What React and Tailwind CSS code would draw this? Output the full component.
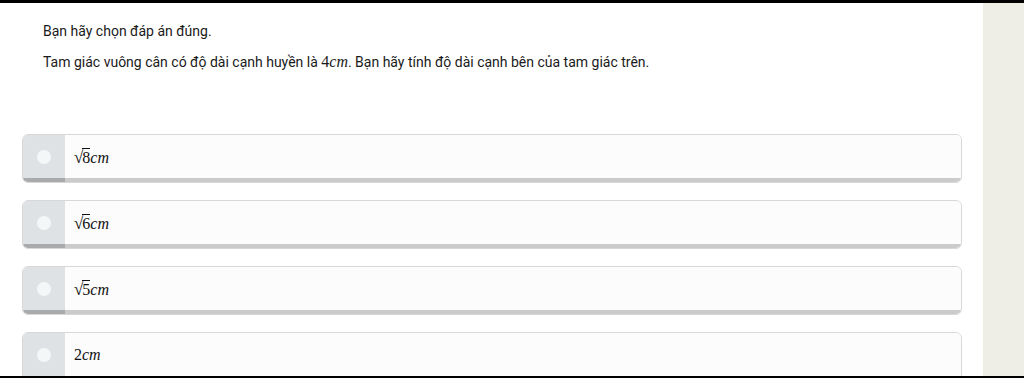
import React from "react";

const options = [
  { root: "8" },
  { root: "6" },
  { root: "5" },
  { plain: "2" },
];

const MathAnswer = ({ root, plain }) => (
  <span className="font-['Liberation_Serif',serif] text-[16px] text-[#111] leading-none flex items-end">
    {root ? (
      <>
        <span className="not-italic text-[17px] mr-[-1px]">√</span>
        <span className="border-t border-[#111] not-italic pt-[1px] leading-none">{root}</span>
      </>
    ) : (
      <span className="not-italic">{plain}</span>
    )}
    <span className="italic">cm</span>
  </span>
);

const Option = ({ opt }) => (
  <div className="flex h-[49px] rounded-[6px] border border-[#d8d8d8] overflow-hidden mb-[17px] bg-[#fcfcfc]">
    <div className="w-[42px] flex flex-col">
      <div className="flex-1 bg-[#dfe2e5] flex items-center justify-center">
        <div className="w-[14px] h-[14px] rounded-full bg-[#f4f7f7]" />
      </div>
      <div className="h-[4px] bg-[#a9aaab]" />
    </div>
    <div className="flex-1 flex flex-col">
      <div className="flex-1 flex items-center pl-[9px] bg-[#fcfcfc]">
        <MathAnswer {...opt} />
      </div>
      <div className="h-[4px] bg-[#cbcbcb]" />
    </div>
  </div>
);

export default function App() {
  return (
    <div className="w-[1024px] h-[378px] border-t-[3px] border-b-2 border-black flex overflow-hidden font-['Roboto',Arial,sans-serif]">
      <div className="flex-1 bg-white overflow-hidden">
        <div className="pl-[43px] pt-[18px] text-[14px] leading-[20px] text-[#1a1a1a]">
          <p className="mb-[11px]">Bạn hãy chọn đáp án đúng.</p>
          <p>
            Tam giác vuông cân có độ dài cạnh huyền là{" "}
            <span className="font-['Liberation_Serif',serif] text-[16px] leading-[20px]">
              4<span className="italic">cm</span>
            </span>
            . Bạn hãy tính độ dài cạnh bên của tam giác trên.
          </p>
        </div>
        <div className="pl-[22px] pr-[21px] pt-[62px]">
          {options.map((o, i) => (
            <Option key={i} opt={o} />
          ))}
        </div>
      </div>
      <div className="w-[41px] bg-[#eeede6]" />
    </div>
  );
}
